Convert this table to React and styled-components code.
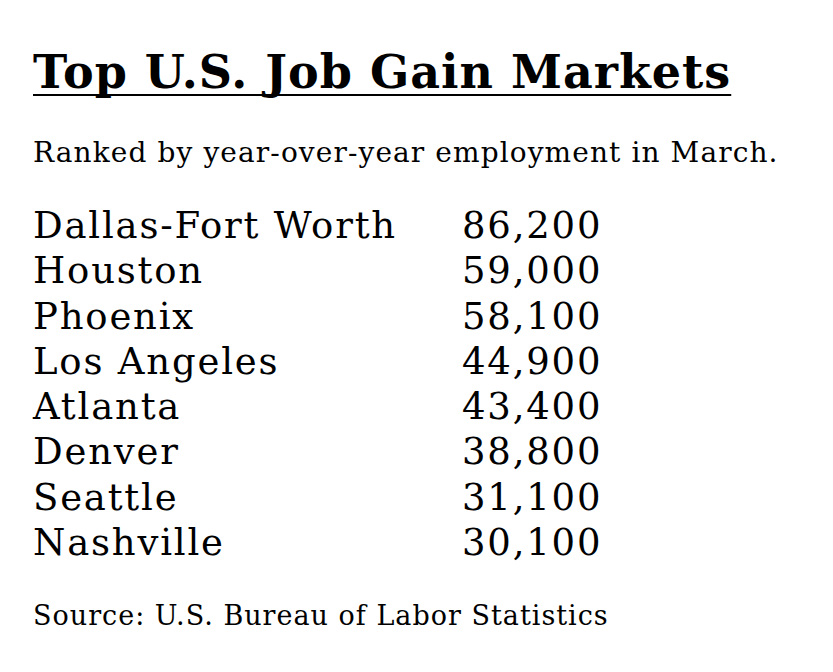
import React from 'react';
import styled, { createGlobalStyle } from 'styled-components';

const GlobalStyle = createGlobalStyle`
  html, body {
    margin: 0;
    background: #ffffff;
  }
  body {
    font-family: 'DejaVu Serif', 'Liberation Serif', serif;
    color: #000000;
  }
`;

const Page = styled.div`
  width: 833px;
  height: 672px;
  padding: 46px 0 0 33px;
  box-sizing: border-box;
`;

const Title = styled.h1`
  margin: 0;
  font-size: 46px;
  font-weight: bold;
  line-height: 52px;
  letter-spacing: 1px;
  text-decoration: underline;
  text-decoration-thickness: 2px;
  text-underline-offset: 6px;
  text-decoration-skip-ink: none;
`;

const Subtitle = styled.p`
  margin: 38px 0 0;
  font-size: 28px;
  line-height: 34px;
  letter-spacing: 1.1px;
`;

const Table = styled.div`
  display: grid;
  grid-template-columns: 429px auto;
  margin-top: 33px;
  font-size: 37px;
  line-height: 45.3px;
  letter-spacing: 1.8px;
`;

const Source = styled.p`
  margin: 34px 0 0;
  font-size: 27px;
  line-height: 34px;
  letter-spacing: 1px;
`;

const markets = [
  ['Dallas-Fort Worth', '86,200'],
  ['Houston', '59,000'],
  ['Phoenix', '58,100'],
  ['Los Angeles', '44,900'],
  ['Atlanta', '43,400'],
  ['Denver', '38,800'],
  ['Seattle', '31,100'],
  ['Nashville', '30,100'],
];

export default function App() {
  return (
    <>
      <GlobalStyle />
      <Page>
        <Title>Top U.S. Job Gain Markets</Title>
        <Subtitle>Ranked by year-over-year employment in March.</Subtitle>
        <Table>
          {markets.map(([city, jobs]) => (
            <React.Fragment key={city}>
              <span>{city}</span>
              <span>{jobs}</span>
            </React.Fragment>
          ))}
        </Table>
        <Source>Source: U.S. Bureau of Labor Statistics</Source>
      </Page>
    </>
  );
}
